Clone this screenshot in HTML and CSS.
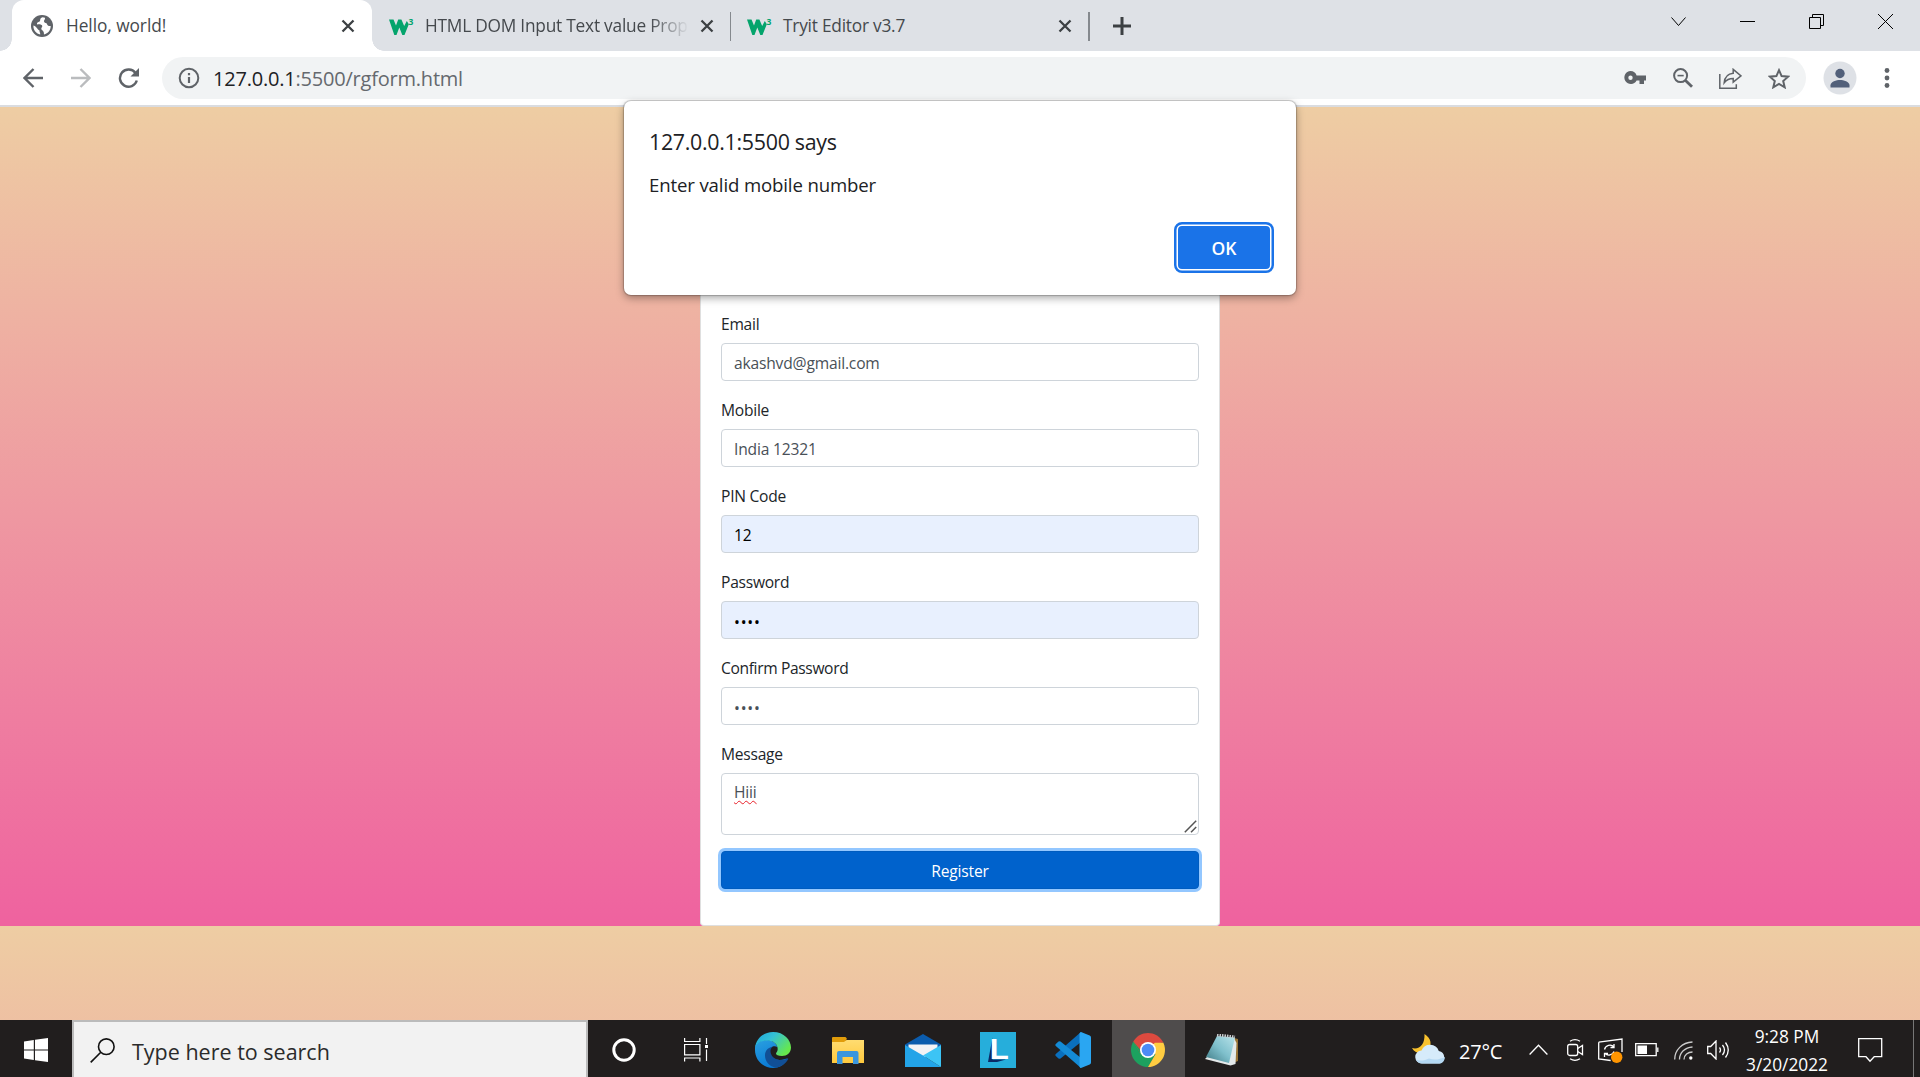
FILE: index.html
```html
<!DOCTYPE html>
<html lang="en">
<head>
<meta charset="utf-8">
<title>Hello, world!</title>
<link rel="stylesheet" href="styles.css">
</head>
<body>
<div class="screen">
  <header class="tabstrip">
    <div class="tab tab-active">
      <svg class="favicon" width="22" height="22" viewBox="0 0 22 22"><circle cx="11" cy="11" r="11" fill="#5f6368"/><path d="M11.500 2.300C8 3.600 10 5.500 8.600 6.600 7 7.600 5.600 7.500 6 9.500c2-.6 4.500-.4 5.200 1.300.5 1.500-1.400 1.700-.8 3.400.5 1.500 2.800 1 2.600 5.300C17 18.500 19.800 15 19.700 11c-2 .3-3.200-.3-3.700-2-.5-1.500-2.500-.6-3-2.500-.3-1.500 1.400-1.700 1-3.700zM2.400 10.500c-.3 4.500 3 8.300 6.800 9 .3-1.700-1-2.500-.7-4C6 14.500 6.500 12 2.400 10.500z" fill="#fff"/></svg>
      <span class="tab-title t-hello">Hello, world!</span>
      <svg class="tab-close" width="14" height="14" viewBox="0 0 14 14"><path d="M1.500 1.500l11 11M12.500 1.500l-11 11"/></svg>
    </div>
    <div class="tab tab-second">
      <svg class="w3" width="25" height="18" viewBox="0 0 25 18"><path d="M0 2.500h4.500L7 8.500l2.200-6h3.200l2.800 6.500 2.600-5 2 3.200L15.500 18h-2.200l-3-7.500L7.500 18H5.300z" fill="#04a46c"/><text x="19.500" y="7.500" class="w3-three">3</text></svg>
      <span class="tab-title t-dom">HTML DOM Input Text value Prop</span>
      <svg class="tab-close" width="14" height="14" viewBox="0 0 14 14"><path d="M1.500 1.500l11 11M12.500 1.500l-11 11"/></svg>
    </div>
    <div class="tab tab-third">
      <svg class="w3" width="25" height="18" viewBox="0 0 25 18"><path d="M0 2.500h4.500L7 8.500l2.200-6h3.200l2.800 6.500 2.600-5 2 3.200L15.500 18h-2.200l-3-7.500L7.500 18H5.300z" fill="#04a46c"/><text x="19.500" y="7.500" class="w3-three">3</text></svg>
      <span class="tab-title t-tryit">Tryit Editor v3.7</span>
      <svg class="tab-close" width="14" height="14" viewBox="0 0 14 14"><path d="M1.500 1.500l11 11M12.500 1.500l-11 11"/></svg>
    </div>
    <svg class="new-tab" width="18" height="18" viewBox="0 0 18 18"><path d="M9 0v18M0 9h18" stroke="#3c4043" stroke-width="3"/></svg>
    <div class="window-buttons">
      <svg width="15" height="15" viewBox="0 0 15 15"><path d="M.5 3.500l7 8 7-8"/></svg>
      <svg width="15" height="15" viewBox="0 0 15 15"><path d="M0 7.500h15"/></svg>
      <svg width="15" height="15" viewBox="0 0 15 15"><path d="M.5 3.500h11v11H.5zM3.500 3.500v-3h11v11h-3"/></svg>
      <svg width="15" height="15" viewBox="0 0 15 15"><path d="M0 0l15 15M15 0L0 15"/></svg>
    </div>
  </header>

  <nav class="toolbar">
    <svg class="nav-icon back" width="20" height="20" viewBox="0 0 20 20"><path d="M20 10H1.500M10.500 1l-9 9 9 9"/></svg>
    <svg class="nav-icon forward" width="20" height="20" viewBox="0 0 20 20"><path d="M0 10h18.500M9.500 1l9 9-9 9"/></svg>
    <svg class="nav-icon reload" width="22" height="20" viewBox="0 0 22 20"><path d="M17.500 5A8.600 8.600 0 1 0 18.800 12.500"/><path d="M21 0v8.500h-8.500z" fill="#5f6368" stroke="none"/></svg>
    <div class="omnibox">
      <svg class="info" width="22" height="22" viewBox="0 0 22 22"><circle cx="11" cy="11" r="9.300" fill="none" stroke="#5f6368" stroke-width="2"/><path d="M11 10v6M11 6v2.200" stroke="#5f6368" stroke-width="2.200"/></svg>
      <span class="url"><b>127.0.0.1</b>:5500/rgform.html</span>
      <div class="omni-icons">
        <svg width="22" height="14" viewBox="0 0 22 14"><path fill="#5f6368" fill-rule="evenodd" d="M6.500 0a6.500 6.500 0 0 1 6.100 4.500H22v5h-2V13h-4.500V9.500h-2.900A6.500 6.500 0 1 1 6.500 0zm0 4.500a2.200 2.200 0 1 0 0 4.400 2.200 2.200 0 0 0 0-4.400z"/></svg>
        <svg class="zoom-out" width="20" height="20" viewBox="0 0 20 20"><g fill="none" stroke="#5f6368" stroke-width="2"><circle cx="7.600" cy="7.600" r="6.500"/><path d="M4.500 7.600h6.200" stroke-width="1.600"/><path d="M12.500 12.500l6.500 6.300" stroke-width="2.800"/></g></svg>
        <svg width="23" height="21" viewBox="0 0 23 21"><g fill="none" stroke="#5f6368" stroke-width="1.500"><path d="M.8 6v14.200h16.500v-4"/><path d="M14.200 1.300l7.800 6.500-7.800 6.400v-3.700c-4 0-6.500 1-9 4.200.5-5 3.500-9 9-9.500z"/></g></svg>
        <svg width="22" height="21" viewBox="0 0 22 21"><path d="M11 2.200l2.600 5.900 6.500.6-4.900 4.300 1.500 6.300-5.700-3.300-5.700 3.300L6.800 13 1.900 8.700l6.500-.6z" fill="none" stroke="#5f6368" stroke-width="2"/></svg>
      </div>
    </div>
    <svg class="avatar" width="34" height="34" viewBox="0 0 34 34"><circle cx="17" cy="17" r="16.500" fill="#dee1e6"/><circle cx="17" cy="12.500" r="4.700" fill="#52607a"/><path d="M7.500 26.500v-2.300c0-3.400 6-5.200 9.500-5.200s9.500 1.800 9.500 5.200v2.300z" fill="#52607a"/></svg>
    <svg class="kebab" width="6" height="20" viewBox="0 0 6 20"><g fill="#5f6368"><circle cx="3" cy="2.500" r="2.400"/><circle cx="3" cy="10" r="2.400"/><circle cx="3" cy="17.500" r="2.400"/></g></svg>
  </nav>

  <main class="viewport">
    <form class="card">
      <div class="form-group"><label>Email</label><input class="control" type="text" value="akashvd@gmail.com"></div>
      <div class="form-group"><label>Mobile</label><input class="control" type="text" value="India 12321"></div>
      <div class="form-group"><label>PIN Code</label><input class="control autofill" type="text" value="12"></div>
      <div class="form-group"><label>Password</label><input class="control autofill dots" type="password" value="1234"></div>
      <div class="form-group"><label class="confirm">Confirm Password</label><input class="control dots" type="password" value="1234"></div>
      <div class="form-group message"><label>Message</label>
        <div class="control area"><span class="misspelled">Hiii</span>
          <svg class="grip" width="13" height="13" viewBox="0 0 13 13"><path d="M.8 12.200L12.200.8M7 12.200l5.200-5.200" stroke="#555" stroke-width="1.500"/></svg>
        </div>
      </div>
      <button class="register" type="button">Register</button>
    </form>
    <section class="dialog">
      <h1>127.0.0.1:5500 says</h1>
      <p>Enter valid mobile number</p>
      <button class="ok" type="button">OK</button>
    </section>
  </main>

  <footer class="taskbar">
    <div class="start"><svg width="24" height="24" viewBox="0 0 24 24"><path fill="#fff" d="M0 3.400L9.800 2v9.500H0zM11 1.800L24 0v11.500H11zM0 12.500h9.800V22L0 20.600zM11 12.500h13V24l-13-1.800z"/></svg></div>
    <div class="search"><svg width="25" height="25" viewBox="0 0 25 25"><g fill="none" stroke="#111" stroke-width="1.600"><circle cx="16.300" cy="8.700" r="7.800"/><path d="M10.800 14.300L.7 24.400"/></g></svg><span>Type here to search</span></div>
    <div class="apps">
      <div class="app narrow"><svg width="24" height="24" viewBox="0 0 24 24"><circle cx="12" cy="12" r="10.200" fill="none" stroke="#fff" stroke-width="3"/></svg></div>
      <div class="app narrow"><svg width="24" height="24" viewBox="0 0 24 24"><g fill="none" stroke="#fff" stroke-width="1.200"><path d="M.6 0v3.500h15.300V0M.6 6.500h15.300v10.300H.6zM.6 23.500V20h15.300v3.500M22.500 0v6M22.500 11.500V23"/></g><path d="M21 7h3v3h-3z" fill="#fff"/></svg></div>
      <div class="app edge"><svg width="36" height="36" viewBox="0 0 36 36">
        <defs><linearGradient id="eg" x1="0" y1="0" x2="1" y2=".6"><stop offset="0" stop-color="#1ba5dd"/><stop offset=".45" stop-color="#35c1d5"/><stop offset="1" stop-color="#66e84c"/></linearGradient><linearGradient id="eb" x1="0" y1="0" x2=".5" y2="1"><stop offset="0" stop-color="#2aa0e0"/><stop offset="1" stop-color="#0878d4"/></linearGradient></defs>
        <path d="M0 16C0 11 5 8 12 8c5 0 9 3 10.500 7-4-2-8 0-8 5 0 5 5 8 10 8 4 0 6-1.500 8-1.500C30 32 25 36 18 36 8 36 0 28 0 18z" fill="url(#eb)"/>
        <path d="M18 14.500c-5 1-8 4-8 9 0 6 4.500 11 11 12.200C27 35 31 31 33.300 27c-.3-.6-.8-.5-1.300-.2-6 3-15.500.6-16.500-6.800-.3-2.300.8-4.500 2.500-5.500z" fill="#114f96"/>
        <path d="M0 16C1 6 9 0 18 0c11 0 18 8 18 15.500 0 5-4 8.500-9 8.500-4 0-6-1-6-2.500 0-1 1.700-1.700 1.700-4.500C22.700 12 18 8.500 12.500 8.500 5 8.500 1 12 0 16z" fill="url(#eg)"/>
      </svg></div>
      <div class="app"><svg width="32" height="27" viewBox="0 0 32 27"><defs><linearGradient id="fg" x1="0" y1="0" x2="0" y2="1"><stop offset="0" stop-color="#ffdc71"/><stop offset="1" stop-color="#ffc93d"/></linearGradient></defs><path d="M0 3.500h12l3-.5h17V26H0z" fill="url(#fg)"/><path d="M0 1q0-1 1-1h12q1 0 1.500 1.200V3L12 5H0z" fill="#e19c0a"/><path d="M5 27V16q0-2 2-2h17.500q2 0 2 2v11H21v-7H10.500v7z" fill="#3a96de"/></svg></div>
      <div class="app"><svg width="36" height="33" viewBox="0 0 36 33"><path d="M0 10.500L18 0l18 10.500v4H0z" fill="#0b5cad"/><path d="M3.500 10.500h29V15L18 25 3.500 15z" fill="#f3f3f5"/><path d="M0 11l18 10.500L36 33H0z" fill="#23a4e8"/><path d="M18 21.500L36 11v22z" fill="#3cc4f5"/></svg></div>
      <div class="app"><svg width="36" height="36" viewBox="0 0 36 36"><path fill="#26aedb" d="M0 0h36v36H0z"/><path d="M12.500 5.500L8 30h9l9-2.500H12.500z" fill="#0a2a66"/><text x="9.800" y="27" textLength="19" lengthAdjust="spacingAndGlyphs" class="app-letter">L</text></svg></div>
      <div class="app"><svg width="36" height="36" viewBox="0 0 36 36"><path d="M26 0v10L5.500 26.500Q4.500 27.200 3.500 26.500L.8 24Q-.2 23 .8 22z" fill="#0a6fbd"/><path d="M26 36V26L5.500 9.500Q4.500 8.800 3.500 9.500L.8 12Q-.2 13 .8 14z" fill="#148bd6"/><path d="M26 0l8.700 3.500Q36 4 36 5.500v25q0 1.500-1.300 2L26 36q-1 0-1.500-1.500v-33Q25 0 26 0z" fill="#2aa6f2"/></svg></div>
      <div class="app open"><svg width="34" height="34" viewBox="0 0 34 34"><path d="M17 17L2.300 8.500A17 17 0 0 1 31.700 8.500z" fill="#dc4a3f"/><path d="M2.300 8.500A17 17 0 0 0 17 34l7.400-12.700L17 17z" fill="#1da15f"/><path d="M31.700 8.500A17 17 0 0 1 17 34l7.400-12.700L17 9.500h15.200z" fill="#ffcd41"/><path d="M2.300 8.500l7.400 12.700L17 17 24 9.500h8.200l-.5-1L17 4z" fill="#dc4a3f"/><path d="M2.300 8.500l7.400 12.800 5 2z" fill="#1da15f"/><circle cx="17" cy="17" r="8" fill="#fff"/><circle cx="17" cy="17" r="6.300" fill="#4c8bf5"/></svg></div>
      <div class="app"><svg class="notepad" width="34" height="32" viewBox="0 0 34 32"><defs><linearGradient id="ng" x1="0" y1="1" x2="1" y2="0"><stop offset="0" stop-color="#3d7883"/><stop offset=".5" stop-color="#7fc0cc"/><stop offset="1" stop-color="#b9e3ea"/></linearGradient></defs><path d="M29 4l4 1v22l-5 2z" fill="#9a7436"/><path d="M29 4l2.500 5-1 21-5 1.500L0 25l3-3z" fill="#e4e9ea"/><path d="M12 2l18 1.500L24 29 1 23z" fill="url(#ng)"/><path d="M12 1l18 2" stroke="#c9cdd0" stroke-width="3" stroke-dasharray="1.500 1"/></svg></div>
    </div>
    <div class="tray">
      <svg class="weather" width="34" height="30" viewBox="0 0 34 30"><path d="M12.500 0C19 4 21 11 15 16.500 9.500 21 3 19.500 0 14c7 2 13-3 12.500-14z" fill="#f9c22e"/><path d="M10 29.500a6.500 6.500 0 0 1-.5-13 9.300 9.300 0 0 1 17.300.5 6.400 6.400 0 0 1 .7 12.500z" fill="#d6ebfa"/><path d="M10 29.500a6.500 6.500 0 0 1-6-4c4 2 9 1 13-1 5 2 11 1 16-1.500-.5 4-2.500 6.500-5.500 6.500z" fill="#b4d8f2"/></svg>
      <span class="temp">27°C</span>
      <svg class="up" width="19" height="11" viewBox="0 0 19 11"><path d="M.6 10.500L9.500 1.200l8.900 9.300"/></svg>
      <svg class="cam" width="17" height="22" viewBox="0 0 17 22"><path d="M3 2.200q5-3 10 0M3 19.800q5 3 10 0"/><rect x=".7" y="5.500" width="10" height="11" rx="2"/><path d="M10.700 9.500l4.800-3v9l-4.800-3"/></svg>
      <svg class="update" width="25" height="25" viewBox="0 0 25 25"><path d="M.7 4.200L24 1v13M.7 4.200V21l12 1.500"/><path d="M6.500 11.500a5.500 5.500 0 0 1 9.500-2.500M16 6v3.500h-3.500M16 13.500a5.500 5.500 0 0 1-9 2M6.500 19v-3.500H10"/><circle cx="18.700" cy="19.300" r="5.700" fill="#ff9500" stroke="none"/></svg>
      <svg class="battery" width="24" height="14" viewBox="0 0 24 14"><path d="M.7.700h20.500v12H.7zM22.800 4.500v4.500"/><path d="M2.500 2.500h9.500v8.500H2.500z" fill="#fff" stroke="none"/></svg>
      <svg class="wifi" width="20" height="20" viewBox="0 0 20 20"><g stroke="#ccc"><path d="M.7 18.500C.7 9 8 1.500 18.500 1"/><path d="M5.500 18.500c0-7 5.500-12 13-12.500"/><path d="M10 18.500c0-4.500 4-7.500 8.500-7.500"/></g><circle cx="16.800" cy="17" r="1.700" fill="#fff" stroke="none"/></svg>
      <svg class="sound" width="24" height="20" viewBox="0 0 24 20"><path d="M.7 6.500h3L9 1v18l-5.300-5.500h-3zM12.500 7.500q2 2.500 0 5M15.500 5q4 5 0 10M18.500 2.500q5.500 7.500 0 15"/></svg>
      <div class="clock"><span class="time">9:28 PM</span><span class="date">3/20/2022</span></div>
      <svg class="note" width="25" height="25" viewBox="0 0 25 25"><path d="M.7.700h23v18h-7.500l-4.200 4.500-4-4.500H.7z"/></svg>
      <i class="desk-edge"></i>
    </div>
  </footer>
</div>
</body>
</html>
```
FILE: styles.css
```css
* { box-sizing: border-box; }
body { margin: 0; font-family: "Open Sans", "Noto Sans", sans-serif; overflow: hidden; }
svg { display: block; flex: none; }
button, input { font-family: inherit; }
.screen { display: flex; flex-direction: column; width: 1920px; height: 1077px; }

/* browser tabs */
.tabstrip { display: flex; height: 51px; background: #dee1e6; }
.tab { position: relative; display: flex; align-items: center; height: 51px; color: #45494d; }
.tab-active { width: 360px; margin-left: 12px; padding: 0 17px 0 19px; background: #fff; border-radius: 12px 12px 0 0; }
.tab-active::before, .tab-active::after { content: ""; position: absolute; bottom: 0; width: 12px; height: 12px; }
.tab-active::before { left: -12px; background: radial-gradient(circle at 0 0, #dee1e6 11.500px, #fff 12px); }
.tab-active::after { right: -12px; background: radial-gradient(circle at 100% 0, #dee1e6 11.500px, #fff 12px); }
.tab-second { width: 359px; padding: 0 17.500px 0 17px; }
.tab-third { width: 358.500px; padding: 0 17.500px 0 16px; }
.tab-second::after, .tab-third::after { content: ""; position: absolute; right: 0; top: 12px; width: 1.500px; height: 29px; background: #85898e; }
.tab-title { flex: 1; white-space: nowrap; font-size: 17.300px; line-height: 51px; letter-spacing: -.22px; }
.favicon + .tab-title { margin-left: 13px; }
.w3 + .tab-title { margin-left: 11px; }
.t-hello { letter-spacing: -.05px; }
.t-dom { -webkit-mask-image: linear-gradient(90deg, #000 225px, transparent 264px); min-width: 265px; margin-right: -3px; }
.w3 { overflow: visible; }
.w3-three { font: 700 8.500px "Open Sans", sans-serif; fill: #04a46c; }
.tab-close { stroke: #3c4043; stroke-width: 2.300; margin-left: auto; }
.new-tab { margin: 17px 0 0 23.500px; }
.window-buttons { display: flex; gap: 54px; margin: 14px 27px 0 auto; fill: none; stroke: #000; stroke-width: 1; }

/* address bar */
.toolbar { display: flex; align-items: center; height: 56px; padding: 0 30px 0 23px; background: #fff; border-bottom: 2px solid #dadce0; }
.nav-icon { fill: none; stroke: #5f6368; stroke-width: 2.400; }
.forward { margin-left: 28px; stroke: #babcbe; }
.reload { margin-left: 27px; }
.omnibox { display: flex; align-items: center; width: 1644px; height: 42px; margin-left: 22px; padding: 0 16px; background: #f1f3f4; border-radius: 21px; }
.url { margin-left: 13px; font-size: 20px; letter-spacing: -.21px; color: #65696e; white-space: nowrap; }
.url b { font-weight: 400; color: #202124; }
.omni-icons { display: flex; align-items: center; gap: 26px; margin-left: auto; }
.zoom-out { margin-left: 1px; }
.avatar { margin-left: 16.500px; }
.kebab { margin-left: auto; }

/* page */
.viewport { position: relative; display: flex; flex-direction: column; align-items: center; height: 913px; background: linear-gradient(#eecda3, #ef629f) 0 0 / 100% 819px; }
.card { display: flex; flex-direction: column; width: 520px; height: 819px; margin: 0; padding: 204px 20px 0; background: #fff; border: 1px solid #dfdfdf; border-top: 0; border-radius: 4px; }
.form-group { height: 86px; font-size: 15.600px; letter-spacing: -.25px; line-height: 24px; color: #212529; }
.form-group label { display: block; margin-bottom: 7px; padding-top: 1px; }
.form-group .confirm { letter-spacing: -.36px; }
.control { display: block; width: 100%; height: 38px; padding: 7px 12px 5px; border: 1px solid #ced4da; border-radius: 4px; background: #fff; color: #495057; font-size: 15.600px; letter-spacing: -.18px; line-height: 24px; outline: 0; }
.autofill { background: #e8f0fe; color: #000; }
.dots { letter-spacing: .8px; padding-top: 8px; padding-bottom: 4px; }
.message { height: 110px; }
.area { position: relative; height: 62px; padding-top: 6px; }
.misspelled { text-decoration: underline wavy #e8202a 1px; text-underline-offset: 2px; }
.grip { position: absolute; right: 1px; bottom: 1px; }
.register { height: 38px; padding-top: 2px; border: 1px solid #005cbf; border-radius: 4px; background: #0062cc; color: #fff; font-size: 15.600px; letter-spacing: -.2px; line-height: 24px; box-shadow: 0 0 0 3px #93c7ff; }

/* alert that hangs over the page and toolbar */
.dialog { position: absolute; left: 624px; top: -6px; width: 672px; height: 194px; padding: 24px 25px 0; background: #fff; border-radius: 7px; box-shadow: 0 0 1px 1px rgba(0,0,0,.2), 0 3px 8px rgba(0,0,0,.35); color: #202124; }
.dialog h1 { margin: 0; font-size: 21.400px; letter-spacing: -.3px; font-weight: 400; line-height: 34px; }
.dialog p { margin: 11px 0 0; font-size: 18.600px; letter-spacing: -.13px; line-height: 30px; }
.ok { position: relative; right: 1px; display: block; width: 92px; height: 43px; margin: 26px 0 0 auto; border: 0; border-radius: 4px; background: #1a73e8; color: #fff; font-size: 17.500px; font-weight: 600; box-shadow: 0 0 0 1.500px #fff, 0 0 0 4px #1a73e8; }

/* taskbar */
.taskbar { display: flex; height: 57px; background: #211e1e; color: #fff; }
.start { width: 72px; padding: 18px 24px; }
.search { display: flex; align-items: flex-start; width: 516px; padding: 16px 0 0 16px; border: 2px solid #bbb; border-bottom: 0; background: #f2f2f2; color: #2b2b2b; }
.search span { margin: 0 0 0 17px; font-size: 21.500px; line-height: 27px; white-space: nowrap; }
.apps { display: flex; }
.app { display: flex; align-items: center; justify-content: center; width: 75px; height: 57px; padding-top: 3px; }
.narrow { width: 72px; }
.edge { margin-left: 3.500px; }
.open { width: 73px; background: #4f4c4c; margin-left: 1.500px; padding-right: 2px; }
.open + .app { padding-right: 2px; }
.app-letter { font: 700 30px "Liberation Sans", sans-serif; fill: #fff; }
.tray { display: flex; align-items: center; margin-left: auto; padding-top: 3px; fill: none; stroke: #fff; stroke-width: 1.300; }
.weather { stroke: none; margin-top: -3px; }
.temp { width: 44px; margin: 3px 26px 0 13px; font-size: 20px; letter-spacing: -.2px; line-height: 26px; white-space: nowrap; }
.up { margin-right: 19px; margin-top: -2px; }
.cam { margin-right: 14px; }
.update { margin-right: 12px; }
.battery { margin-right: 15px; }
.wifi { margin-right: 13px; margin-top: 2px; }
.sound { margin-right: 13px; }
.clock { display: flex; flex-direction: column; align-items: center; width: 86px; margin-top: 1px; font-size: 17.300px; line-height: 28px; white-space: nowrap; }
.note { margin: 0 30px 0 28px; }
.desk-edge { width: 1px; height: 57px; margin: -3px 6px 0 0; background: #777; }
```
